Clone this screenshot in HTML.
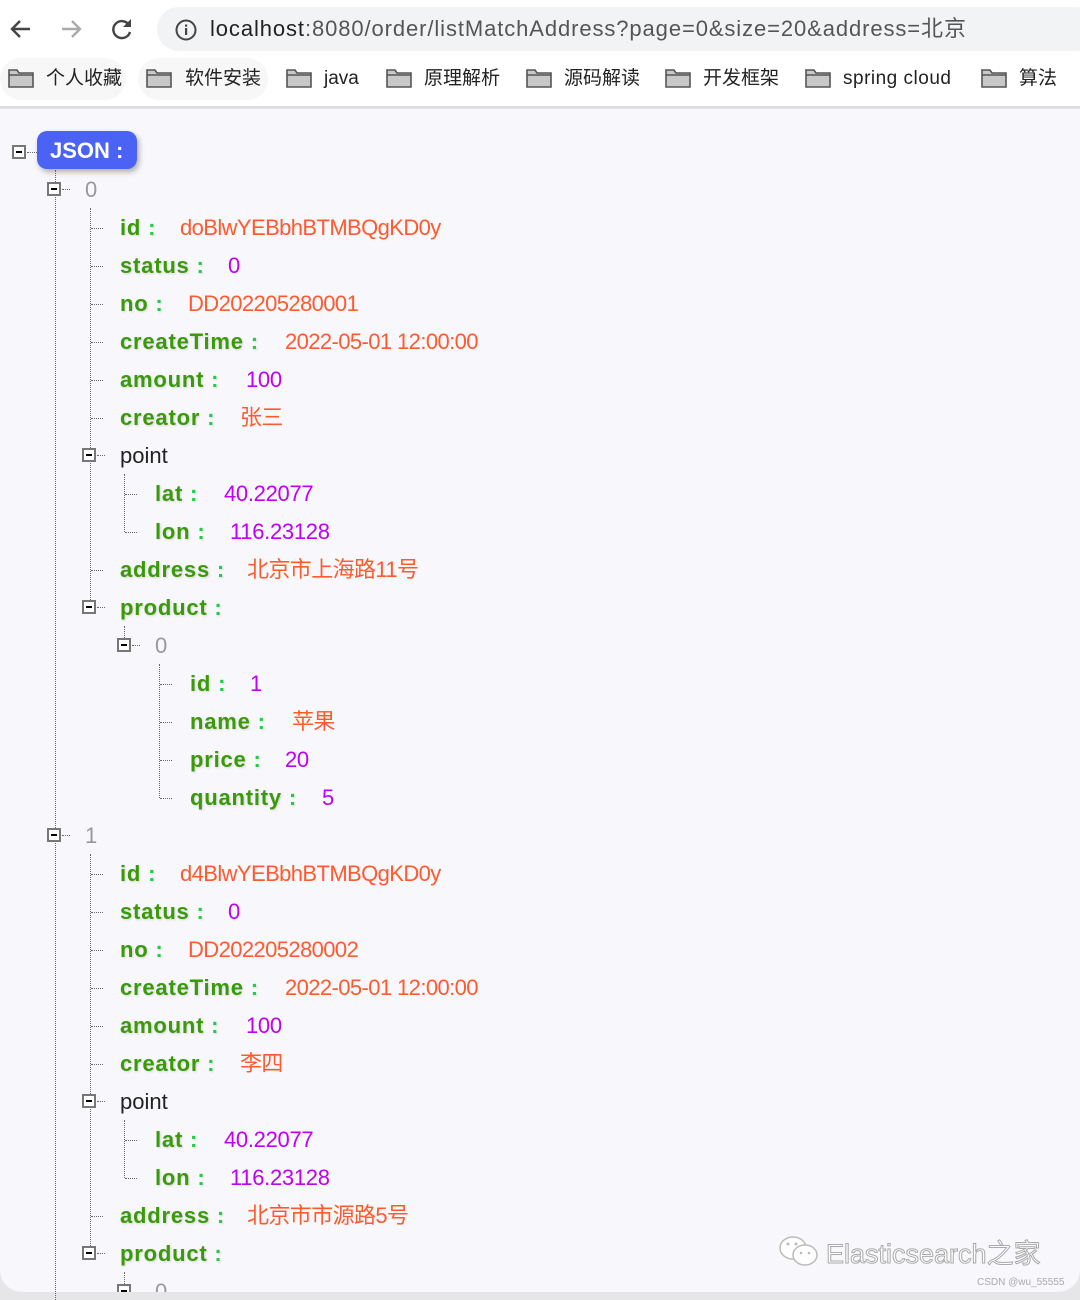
<!DOCTYPE html>
<html><head><meta charset="utf-8"><style>
*{margin:0;padding:0;box-sizing:border-box}
body{width:1080px;height:1300px;overflow:hidden;background:#e6e6e8;font-family:"Liberation Sans","Noto Sans CJK SC",sans-serif;position:relative}
#hd{position:absolute;left:0;top:0;width:1080px;height:108px;background:#fff;border-bottom:2px solid #dcdcdc}
#ct{position:absolute;left:0;top:109px;width:1080px;height:1183px;background:#f8f8fc;border-radius:0 0 22px 22px}
.a{position:absolute;white-space:nowrap;line-height:28px;height:28px}
.k{font-weight:bold;font-size:22px;color:#3a9a0a;letter-spacing:.8px;text-shadow:1px 1px 2px rgba(0,0,0,.15)}
.k i{font-style:normal;color:#22cc44}
.s{font-size:22px;color:#ff5a2e;letter-spacing:-.6px}
.n{font-size:22px;color:#c000f0;letter-spacing:-.3px}
.g{font-size:22px;color:#999}
.p{font-size:22px;color:#222}
.t{position:absolute;width:14px;height:14px;border:2px solid #777;background:#fff}
.t:after{content:"";position:absolute;left:2px;top:4px;width:6px;height:2px;background:#000}
.h{position:absolute;height:0;border-top:1px dotted #666}
.v{position:absolute;width:0;border-left:1px dotted #666}
.f{position:absolute;width:26px;height:19px}
.bm{position:absolute;top:66px;font-size:19px;color:#222;line-height:26px}
</style></head><body>
<div id="hd">
<svg style="position:absolute;left:8px;top:17px" width="26" height="24" viewBox="0 0 26 24"><path d="M22 12H5M12 4l-8 8 8 8" stroke="#444" stroke-width="2.4" fill="none"/></svg>
<svg style="position:absolute;left:58px;top:17px" width="26" height="24" viewBox="0 0 26 24"><path d="M4 12h17M14 4l8 8-8 8" stroke="#aaa" stroke-width="2.4" fill="none"/></svg>
<svg style="position:absolute;left:109px;top:16px" width="26" height="26" viewBox="0 0 26 26"><path d="M20 9A8.5 8.5 0 1 0 21 16" stroke="#444" stroke-width="2.4" fill="none"/><path d="M22 3v8h-8z" fill="#444"/></svg>
<div style="position:absolute;left:157px;top:7px;width:940px;height:44px;border-radius:22px;background:#f1f3f4"></div>
<svg style="position:absolute;left:174px;top:18px" width="24" height="24" viewBox="0 0 24 24"><circle cx="12" cy="12" r="9.5" stroke="#444" stroke-width="2" fill="none"/><rect x="11" y="10" width="2.2" height="7" fill="#444"/><rect x="11" y="6.5" width="2.2" height="2.2" fill="#444"/></svg>
<div class="a" style="left:210px;top:15px;font-size:22px;color:#222;letter-spacing:.9px">localhost<span style="color:#555">:8080/order/listMatchAddress?page=0&amp;size=20&amp;address=北京</span></div>
<div style="position:absolute;left:138px;top:58px;width:130px;height:42px;border-radius:21px;background:#f7f7f8"></div>
<div style="position:absolute;left:0;top:58px;width:126px;height:42px;border-radius:21px;background:#f7f7f8"></div>
<svg class="f" style="left:8px;top:69px" viewBox="0 0 26 19"><path d="M1 1h8l2 3h14v14H1z" fill="#c8c8c8" stroke="#555" stroke-width="1.6"/><path d="M1 6h24" stroke="#555" stroke-width="1.4"/></svg><div class="bm" style="left:46px">个人收藏</div>
<svg class="f" style="left:146px;top:69px" viewBox="0 0 26 19"><path d="M1 1h8l2 3h14v14H1z" fill="#c8c8c8" stroke="#555" stroke-width="1.6"/><path d="M1 6h24" stroke="#555" stroke-width="1.4"/></svg><div class="bm" style="left:185px">软件安装</div>
<svg class="f" style="left:286px;top:69px" viewBox="0 0 26 19"><path d="M1 1h8l2 3h14v14H1z" fill="#c8c8c8" stroke="#555" stroke-width="1.6"/><path d="M1 6h24" stroke="#555" stroke-width="1.4"/></svg><div class="bm" style="left:324px">java</div>
<svg class="f" style="left:386px;top:69px" viewBox="0 0 26 19"><path d="M1 1h8l2 3h14v14H1z" fill="#c8c8c8" stroke="#555" stroke-width="1.6"/><path d="M1 6h24" stroke="#555" stroke-width="1.4"/></svg><div class="bm" style="left:424px">原理解析</div>
<svg class="f" style="left:526px;top:69px" viewBox="0 0 26 19"><path d="M1 1h8l2 3h14v14H1z" fill="#c8c8c8" stroke="#555" stroke-width="1.6"/><path d="M1 6h24" stroke="#555" stroke-width="1.4"/></svg><div class="bm" style="left:564px">源码解读</div>
<svg class="f" style="left:665px;top:69px" viewBox="0 0 26 19"><path d="M1 1h8l2 3h14v14H1z" fill="#c8c8c8" stroke="#555" stroke-width="1.6"/><path d="M1 6h24" stroke="#555" stroke-width="1.4"/></svg><div class="bm" style="left:703px">开发框架</div>
<svg class="f" style="left:805px;top:69px" viewBox="0 0 26 19"><path d="M1 1h8l2 3h14v14H1z" fill="#c8c8c8" stroke="#555" stroke-width="1.6"/><path d="M1 6h24" stroke="#555" stroke-width="1.4"/></svg><div class="bm" style="left:843px;letter-spacing:.5px">spring cloud</div>
<svg class="f" style="left:981px;top:69px" viewBox="0 0 26 19"><path d="M1 1h8l2 3h14v14H1z" fill="#c8c8c8" stroke="#555" stroke-width="1.6"/><path d="M1 6h24" stroke="#555" stroke-width="1.4"/></svg><div class="bm" style="left:1019px">算法</div>
</div>
<div id="ct"></div>

<div class="t" style="left:12px;top:145px"></div><div class="h" style="left:27px;top:152px;width:10px"></div>
<div style="position:absolute;left:37px;top:131px;width:100px;height:38px;border-radius:10px;background:#4a63f5;box-shadow:2px 3px 6px rgba(0,0,0,.3);color:#fff;font-weight:bold;font-size:22px;line-height:40px;padding-left:13px">JSON :</div>

<div class="v" style="left:55px;top:170px;height:1130px"></div>

<div>
<div class="t" style="left:47px;top:182px"></div><div class="h" style="left:62px;top:189px;width:8px"></div><div class="a g" style="left:85px;top:176px">0</div>
<div class="v" style="left:90px;top:208px;height:400px"></div>
<div class="h" style="left:91px;top:228px;width:12px"></div><div class="a k" style="left:120px;top:214px">id <i>:</i></div><div class="a s" style="left:180px;top:214px">doBlwYEBbhBTMBQgKD0y</div>
<div class="h" style="left:91px;top:266px;width:12px"></div><div class="a k" style="left:120px;top:252px">status <i>:</i></div><div class="a n" style="left:228px;top:252px">0</div>
<div class="h" style="left:91px;top:304px;width:12px"></div><div class="a k" style="left:120px;top:290px">no <i>:</i></div><div class="a s" style="left:188px;top:290px">DD202205280001</div>
<div class="h" style="left:91px;top:342px;width:12px"></div><div class="a k" style="left:120px;top:328px">createTime <i>:</i></div><div class="a s" style="left:285px;top:328px">2022-05-01 12:00:00</div>
<div class="h" style="left:91px;top:380px;width:12px"></div><div class="a k" style="left:120px;top:366px">amount <i>:</i></div><div class="a n" style="left:246px;top:366px">100</div>
<div class="h" style="left:91px;top:418px;width:12px"></div><div class="a k" style="left:120px;top:404px">creator <i>:</i></div><div class="a s" style="left:240px;top:404px">张三</div>
<div class="t" style="left:82px;top:448px"></div><div class="h" style="left:97px;top:455px;width:8px"></div><div class="a p" style="left:120px;top:442px">point</div>
<div class="v" style="left:124px;top:474px;height:58px"></div>
<div class="h" style="left:125px;top:494px;width:12px"></div><div class="a k" style="left:155px;top:480px">lat <i>:</i></div><div class="a n" style="left:224px;top:480px">40.22077</div>
<div class="h" style="left:125px;top:532px;width:12px"></div><div class="a k" style="left:155px;top:518px">lon <i>:</i></div><div class="a n" style="left:230px;top:518px">116.23128</div>
<div class="h" style="left:91px;top:570px;width:12px"></div><div class="a k" style="left:120px;top:556px">address <i>:</i></div><div class="a s" style="left:247px;top:556px">北京市上海路11号</div>
<div class="t" style="left:82px;top:600px"></div><div class="h" style="left:97px;top:607px;width:8px"></div><div class="a k" style="left:120px;top:594px">product <i>:</i></div>
<div class="v" style="left:124px;top:626px;height:12px"></div>
<div class="t" style="left:117px;top:638px"></div><div class="h" style="left:132px;top:645px;width:8px"></div><div class="a g" style="left:155px;top:632px">0</div>
<div class="v" style="left:159px;top:664px;height:134px"></div>
<div class="h" style="left:160px;top:684px;width:12px"></div><div class="a k" style="left:190px;top:670px">id <i>:</i></div><div class="a n" style="left:250px;top:670px">1</div>
<div class="h" style="left:160px;top:722px;width:12px"></div><div class="a k" style="left:190px;top:708px">name <i>:</i></div><div class="a s" style="left:292px;top:708px">苹果</div>
<div class="h" style="left:160px;top:760px;width:12px"></div><div class="a k" style="left:190px;top:746px">price <i>:</i></div><div class="a n" style="left:285px;top:746px">20</div>
<div class="h" style="left:160px;top:798px;width:12px"></div><div class="a k" style="left:190px;top:784px">quantity <i>:</i></div><div class="a n" style="left:322px;top:784px">5</div>
</div>

<div style="position:absolute;left:0;top:646px;width:1080px;height:646px;overflow:hidden">
<div class="t" style="left:47px;top:182px"></div><div class="h" style="left:62px;top:189px;width:8px"></div><div class="a g" style="left:85px;top:176px">1</div>
<div class="v" style="left:90px;top:208px;height:400px"></div>
<div class="h" style="left:91px;top:228px;width:12px"></div><div class="a k" style="left:120px;top:214px">id <i>:</i></div><div class="a s" style="left:180px;top:214px">d4BlwYEBbhBTMBQgKD0y</div>
<div class="h" style="left:91px;top:266px;width:12px"></div><div class="a k" style="left:120px;top:252px">status <i>:</i></div><div class="a n" style="left:228px;top:252px">0</div>
<div class="h" style="left:91px;top:304px;width:12px"></div><div class="a k" style="left:120px;top:290px">no <i>:</i></div><div class="a s" style="left:188px;top:290px">DD202205280002</div>
<div class="h" style="left:91px;top:342px;width:12px"></div><div class="a k" style="left:120px;top:328px">createTime <i>:</i></div><div class="a s" style="left:285px;top:328px">2022-05-01 12:00:00</div>
<div class="h" style="left:91px;top:380px;width:12px"></div><div class="a k" style="left:120px;top:366px">amount <i>:</i></div><div class="a n" style="left:246px;top:366px">100</div>
<div class="h" style="left:91px;top:418px;width:12px"></div><div class="a k" style="left:120px;top:404px">creator <i>:</i></div><div class="a s" style="left:240px;top:404px">李四</div>
<div class="t" style="left:82px;top:448px"></div><div class="h" style="left:97px;top:455px;width:8px"></div><div class="a p" style="left:120px;top:442px">point</div>
<div class="v" style="left:124px;top:474px;height:58px"></div>
<div class="h" style="left:125px;top:494px;width:12px"></div><div class="a k" style="left:155px;top:480px">lat <i>:</i></div><div class="a n" style="left:224px;top:480px">40.22077</div>
<div class="h" style="left:125px;top:532px;width:12px"></div><div class="a k" style="left:155px;top:518px">lon <i>:</i></div><div class="a n" style="left:230px;top:518px">116.23128</div>
<div class="h" style="left:91px;top:570px;width:12px"></div><div class="a k" style="left:120px;top:556px">address <i>:</i></div><div class="a s" style="left:247px;top:556px">北京市市源路5号</div>
<div class="t" style="left:82px;top:600px"></div><div class="h" style="left:97px;top:607px;width:8px"></div><div class="a k" style="left:120px;top:594px">product <i>:</i></div>
<div class="v" style="left:124px;top:626px;height:12px"></div>
<div class="t" style="left:117px;top:638px"></div><div class="a g" style="left:155px;top:632px">0</div>
</div>

<svg style="position:absolute;left:778px;top:1234px" width="44" height="36" viewBox="0 0 44 36"><ellipse cx="15" cy="14" rx="13" ry="11" fill="#fff" stroke="#bbb" stroke-width="1.5"/><ellipse cx="27" cy="21" rx="12" ry="10" fill="#fff" stroke="#bbb" stroke-width="1.5"/><circle cx="10" cy="10" r="1.5" fill="#bbb"/><circle cx="18" cy="10" r="1.5" fill="#bbb"/><circle cx="23" cy="19" r="1.3" fill="#bbb"/><circle cx="31" cy="19" r="1.3" fill="#bbb"/></svg>
<div class="a" style="left:826px;top:1238px;font-size:27px;height:32px;line-height:32px;color:#fff;-webkit-text-stroke:1px #aaa">Elasticsearch之家</div>
<div class="a" style="left:977px;top:1276px;font-size:10px;height:14px;line-height:14px;color:#aaa">CSDN @wu_55555</div>
</body></html>
